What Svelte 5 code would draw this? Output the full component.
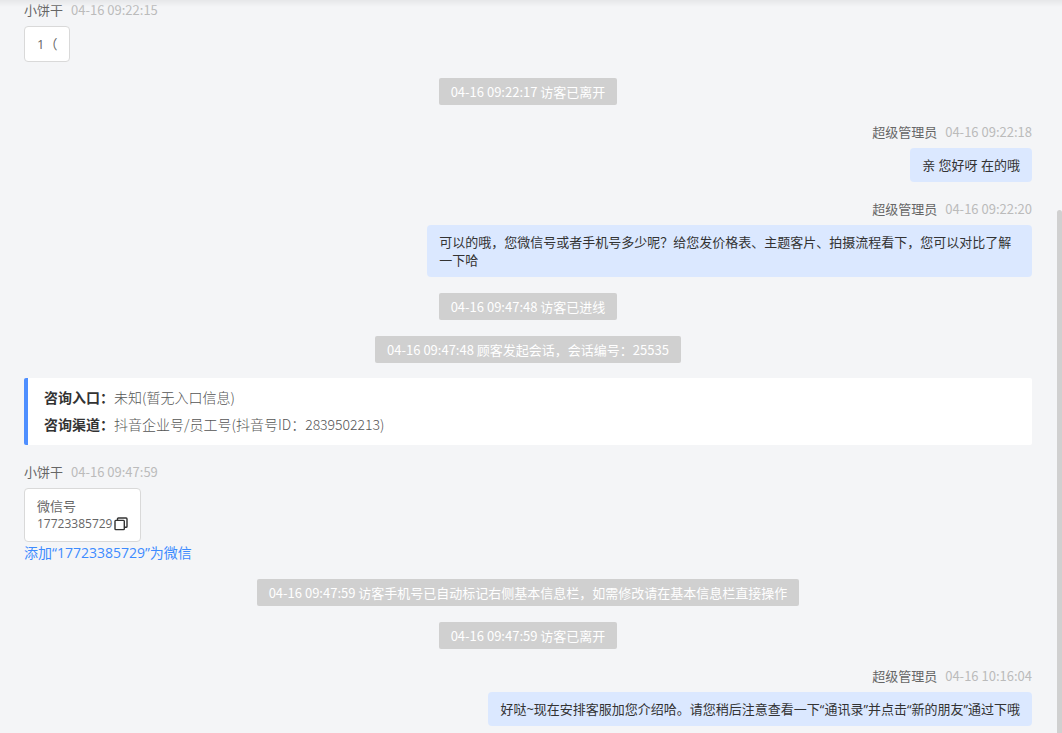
<script>
  const entries = [
    { type: 'visitor', name: '小饼干', time: '04-16 09:22:15', text: '1（' },
    { type: 'notice', time: '04-16 09:22:17', text: '访客已离开' },
    { type: 'staff', name: '超级管理员', time: '04-16 09:22:18', text: '亲 您好呀 在的哦' },
    {
      type: 'staff',
      name: '超级管理员',
      time: '04-16 09:22:20',
      text: '可以的哦，您微信号或者手机号多少呢？给您发价格表、主题客片、拍摄流程看下，您可以对比了解一下哈'
    },
    { type: 'notice', time: '04-16 09:47:48', text: '访客已进线' },
    { type: 'notice', time: '04-16 09:47:48', text: '顾客发起会话，会话编号：25535' },
    {
      type: 'source',
      rows: [
        { label: '咨询入口：', value: '未知(暂无入口信息)' },
        { label: '咨询渠道：', value: '抖音企业号/员工号(抖音号ID：2839502213)' }
      ]
    },
    { type: 'visitor', name: '小饼干', time: '04-16 09:47:59', text: '微信号', wechat: '17723385729' },
    { type: 'notice', time: '04-16 09:47:59', text: '访客手机号已自动标记右侧基本信息栏，如需修改请在基本信息栏直接操作' },
    { type: 'notice', time: '04-16 09:47:59', text: '访客已离开' },
    {
      type: 'staff',
      name: '超级管理员',
      time: '04-16 10:16:04',
      text: '好哒~现在安排客服加您介绍哈。请您稍后注意查看一下“通讯录”并点击“新的朋友”通过下哦'
    }
  ];

  function copy(value) {
    navigator.clipboard?.writeText(value);
  }
</script>

<main class="chat">
  <div class="list">
    {#each entries as entry}
      {#if entry.type === 'notice'}
        <p class="notice">{entry.time} {entry.text}</p>
      {:else if entry.type === 'source'}
        <dl class="source">
          {#each entry.rows as row}
            <div class="source-row">
              <dt>{row.label}</dt>
              <dd>{row.value}</dd>
            </div>
          {/each}
        </dl>
      {:else}
        <article class="message {entry.type}">
          <header class="meta">
            <span class="name">{entry.name}</span>
            <time>{entry.time}</time>
          </header>
          <div class="bubble">
            <div>{entry.text}</div>
            {#if entry.wechat}
              <div class="wechat">
                <span class="number">{entry.wechat}</span>
                <button class="copy" aria-label="复制" onclick={() => copy(entry.wechat)}>
                  <svg width="14" height="14" viewBox="0 0 14 14" fill="none" stroke="#333" stroke-width="1.4" stroke-linejoin="round">
                    <rect x="1" y="3.4" width="9.3" height="9.2" rx="0.8" />
                    <path d="M3.5 3.2V1.9q0-.9.9-.9h7.7q.9 0 .9.9v7.5q0 .9-.9.9h-1.5" />
                  </svg>
                </button>
              </div>
            {/if}
          </div>
          {#if entry.wechat}
            <a class="add" href="#add">添加“{entry.wechat}”为微信</a>
          {/if}
        </article>
      {/if}
    {/each}
  </div>
  <div class="top-shadow"></div>
  <div class="scroll-thumb"></div>
</main>

<style>
  :global(body) {
    margin: 0;
    background: #f4f5f7;
  }

  .chat {
    position: relative;
    height: 100vh;
    overflow: hidden;
    background: #f4f5f7;
    font-family: "Noto Sans CJK SC", sans-serif;
    font-size: 13px;
    line-height: 18px;
    color: #333;
  }

  /* newest message stays pinned to the bottom edge */
  .list {
    display: flex;
    flex-direction: column;
    justify-content: flex-end;
    gap: 16px;
    box-sizing: border-box;
    height: 100%;
    padding: 0 30px 7px 24px;
  }

  .list > * {
    flex-shrink: 0;
  }

  .notice {
    align-self: center;
    margin: 0;
    padding: 5px 12px 4px;
    border-radius: 2px;
    background: #d0d0d0;
    color: #fff;
  }

  .message {
    display: flex;
    flex-direction: column;
    align-items: flex-start;
  }

  .message.staff {
    align-items: flex-end;
  }

  .meta {
    display: flex;
    gap: 8px;
    margin-bottom: 5px;
    line-height: 22px;
  }

  .name {
    color: #666;
  }

  time {
    color: #bbb;
  }

  .bubble {
    box-sizing: border-box;
    max-width: 60%;
    padding: 8px 12px;
    border-radius: 4px;
    font-family: "Open Sans", "Noto Sans CJK SC", sans-serif;
  }

  .visitor .bubble {
    border: 1px solid #d9d9d9;
    background: #fff;
    color: #666;
  }

  .staff .bubble {
    background: #dbe8ff;
  }

  .wechat {
    display: flex;
    align-items: center;
    gap: 2px;
    height: 18px;
  }

  .number {
    font-size: 12px;
  }

  .copy {
    display: flex;
    padding: 0;
    border: 0;
    background: none;
    cursor: pointer;
  }

  .add {
    font-family: "Open Sans", "Noto Sans CJK SC", sans-serif;
    font-size: 14px;
    line-height: 21px;
    color: #3d8bff;
    text-decoration: none;
  }

  .source {
    margin: -1px 0 0;
    padding: 6px 16px 7px;
    border-left: 4px solid #4f8fff;
    border-radius: 2px;
    background: #fff;
    font-size: 14px;
    line-height: 27px;
  }

  .source-row {
    display: flex;
  }

  dt {
    font-weight: 700;
  }

  dd {
    margin: 0;
    font-weight: 300;
    color: #555;
  }

  .top-shadow {
    position: absolute;
    top: 0;
    left: 0;
    right: 0;
    height: 7px;
    background: linear-gradient(#e6e7e9, rgba(244, 245, 247, 0));
  }

  .scroll-thumb {
    position: absolute;
    top: 210px;
    right: 0;
    bottom: 0;
    width: 5px;
    border-radius: 3px 3px 0 0;
    background: #d0d0d0;
  }
</style>
